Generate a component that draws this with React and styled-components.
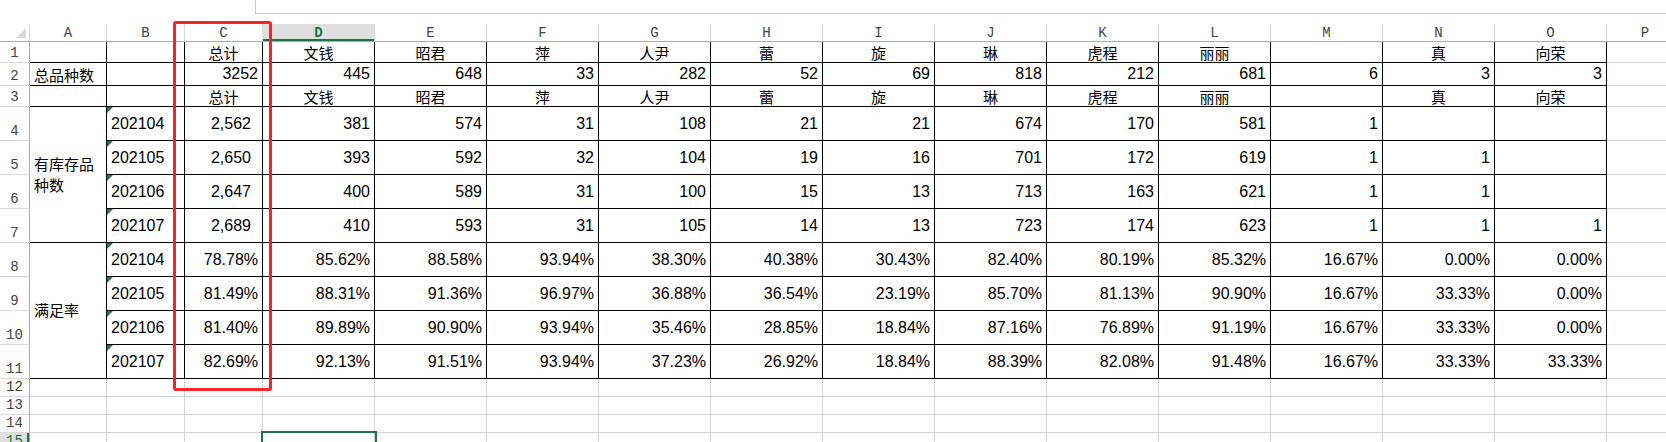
import React from "react";
import styled, { createGlobalStyle, css } from "styled-components";

const GlobalStyle = createGlobalStyle`
  html, body {
    margin: 0;
    padding: 0;
    background: #fff;
  }
  body {
    font-family: "Liberation Sans", "Noto Sans CJK SC", sans-serif;
  }
`;

const COLUMNS = ["A", "B", "C", "D", "E", "F", "G", "H", "I", "J", "K", "L", "M", "N", "O", "P"];
const ACTIVE_COL = "D";
const ACTIVE_ROW = 15;

const NAMES = ["总计", "文钱", "昭君", "萍", "人尹", "蕾", "旋", "琳", "虎程", "丽丽", "", "真", "向荣"];
const TOTALS = ["3252", "445", "648", "33", "282", "52", "69", "818", "212", "681", "6", "3", "3"];

const STOCK = [
  ["202104", ["2,562", "381", "574", "31", "108", "21", "21", "674", "170", "581", "1", "", ""]],
  ["202105", ["2,650", "393", "592", "32", "104", "19", "16", "701", "172", "619", "1", "1", ""]],
  ["202106", ["2,647", "400", "589", "31", "100", "15", "13", "713", "163", "621", "1", "1", ""]],
  ["202107", ["2,689", "410", "593", "31", "105", "14", "13", "723", "174", "623", "1", "1", "1"]],
];

const RATE = [
  ["202104", ["78.78%", "85.62%", "88.58%", "93.94%", "38.30%", "40.38%", "30.43%", "82.40%", "80.19%", "85.32%", "16.67%", "0.00%", "0.00%"]],
  ["202105", ["81.49%", "88.31%", "91.36%", "96.97%", "36.88%", "36.54%", "23.19%", "85.70%", "81.13%", "90.90%", "16.67%", "33.33%", "0.00%"]],
  ["202106", ["81.40%", "89.89%", "90.90%", "93.94%", "35.46%", "28.85%", "18.84%", "87.16%", "76.89%", "91.19%", "16.67%", "33.33%", "0.00%"]],
  ["202107", ["82.69%", "92.13%", "91.51%", "93.94%", "37.23%", "26.92%", "18.84%", "88.39%", "82.08%", "91.48%", "16.67%", "33.33%", "33.33%"]],
];

const Page = styled.div`
  position: relative;
  width: 1666px;
  height: 442px;
  overflow: hidden;
  background: #fff;
`;

const TopBar = styled.div`
  height: 24px;
  display: flex;
`;

const FormulaBox = styled.div`
  margin-left: 255px;
  flex: 1;
  height: 13px;
  border-left: 1px solid #c6c6c6;
  border-bottom: 1px solid #c6c6c6;
`;

const Sheet = styled.div`
  display: grid;
  grid-template-columns: 30px 77px 78px 78px repeat(12, 112px) 77px;
  grid-template-rows: 18px 21px 23px 21px repeat(8, 34px) repeat(4, 18px);
`;

const Corner = styled.div`
  display: flex;
  align-items: flex-end;
  justify-content: flex-end;
  padding: 0 3px 3px 0;
  border-right: 1px solid #dadada;
  border-bottom: 1px solid #ababab;
`;

const ColHead = styled.div`
  display: flex;
  align-items: center;
  justify-content: center;
  font-family: "Liberation Mono", monospace;
  font-size: 14px;
  color: #444;
  border-right: 1px solid #dadada;
  border-bottom: 1px solid #ababab;
  ${(p) =>
    p.$active &&
    css`
      background: #dfdfdf;
      color: #217346;
      font-weight: bold;
      box-shadow: inset 0 -2px 0 #217346;
    `}
`;

const RowHead = styled.div`
  display: flex;
  align-items: flex-end;
  justify-content: center;
  padding-bottom: 1px;
  font-family: "Liberation Mono", monospace;
  font-size: 14px;
  line-height: 16px;
  color: #444;
  border-right: 1px solid #ababab;
  border-bottom: 1px solid #dadada;
  ${(p) =>
    p.$active &&
    css`
      background: #dfdfdf;
      color: #217346;
      box-shadow: inset -2px 0 0 #217346;
    `}
`;

const Cell = styled.div`
  position: relative;
  display: flex;
  align-items: center;
  justify-content: ${(p) =>
    p.$align === "left" ? "flex-start" : p.$align === "center" ? "center" : "flex-end"};
  padding: 0 ${(p) => p.$padRight || 4}px 0 4px;
  font-size: ${(p) => (p.$cjk ? 15 : 16)}px;
  color: #000;
  white-space: nowrap;
  overflow: hidden;
  border-right: 1px solid ${(p) => (p.$plain ? "#d4d4d4" : "#000")};
  border-bottom: 1px solid ${(p) => (p.$plain ? "#d4d4d4" : "#000")};
  ${(p) => p.$span && css`grid-row: span ${p.$span};`}
  ${(p) =>
    p.$marker &&
    css`
      &::before {
        content: "";
        position: absolute;
        top: 0;
        left: 0;
        border-top: 6px solid #1e7a45;
        border-right: 6px solid transparent;
      }
    `}
  ${(p) =>
    p.$selected &&
    css`
      outline: 2px solid #217346;
      z-index: 1;
      overflow: visible;
    `}
`;

const Label = styled.span`
  white-space: normal;
  line-height: 21px;
  word-break: break-all;
`;

const Highlight = styled.div`
  position: absolute;
  left: 173px;
  top: 21px;
  width: 99px;
  height: 370px;
  box-sizing: border-box;
  border: 3px solid #f7252a;
  border-radius: 3px;
  pointer-events: none;
`;

const HeaderRow = ({ names, row }) => (
  <>
    <RowHead>{row}</RowHead>
    <Cell />
    <Cell />
    {names.map((n, i) => (
      <Cell key={i} $align="center" $cjk>
        {n}
      </Cell>
    ))}
    <Cell $plain />
  </>
);

const Block = ({ startRow, label, rows, padFirst }) =>
  rows.map(([month, values], r) => (
    <React.Fragment key={month}>
      <RowHead>{startRow + r}</RowHead>
      {r === 0 && (
        <Cell $span={rows.length} $align="left" $cjk>
          <Label>{label}</Label>
        </Cell>
      )}
      <Cell $align="left" $marker>
        {month}
      </Cell>
      {values.map((v, i) => (
        <Cell key={i} $padRight={padFirst && i === 0 ? 11 : 4}>
          {v}
        </Cell>
      ))}
      <Cell $plain />
    </React.Fragment>
  ));

const EmptyRow = ({ row }) => (
  <>
    <RowHead $active={row === ACTIVE_ROW}>{row}</RowHead>
    {COLUMNS.map((c) => (
      <Cell key={c} $plain $selected={row === ACTIVE_ROW && c === ACTIVE_COL} />
    ))}
  </>
);

export default function App() {
  return (
    <Page>
      <GlobalStyle />
      <TopBar>
        <FormulaBox />
      </TopBar>
      <Sheet>
        <Corner>
          <svg width="10" height="10" viewBox="0 0 10 10">
            <polygon points="10,0 10,10 0,10" fill="#d9d9d9" />
          </svg>
        </Corner>
        {COLUMNS.map((c) => (
          <ColHead key={c} $active={c === ACTIVE_COL}>
            {c}
          </ColHead>
        ))}

        <HeaderRow names={NAMES} row={1} />

        <RowHead>2</RowHead>
        <Cell $align="left" $cjk>
          总品种数
        </Cell>
        <Cell />
        {TOTALS.map((t, i) => (
          <Cell key={i}>{t}</Cell>
        ))}
        <Cell $plain />

        <HeaderRow names={NAMES} row={3} />

        <Block startRow={4} label="有库存品种数" rows={STOCK} padFirst />
        <Block startRow={8} label="满足率" rows={RATE} />

        {[12, 13, 14, 15].map((r) => (
          <EmptyRow key={r} row={r} />
        ))}
      </Sheet>
      <Highlight />
    </Page>
  );
}
